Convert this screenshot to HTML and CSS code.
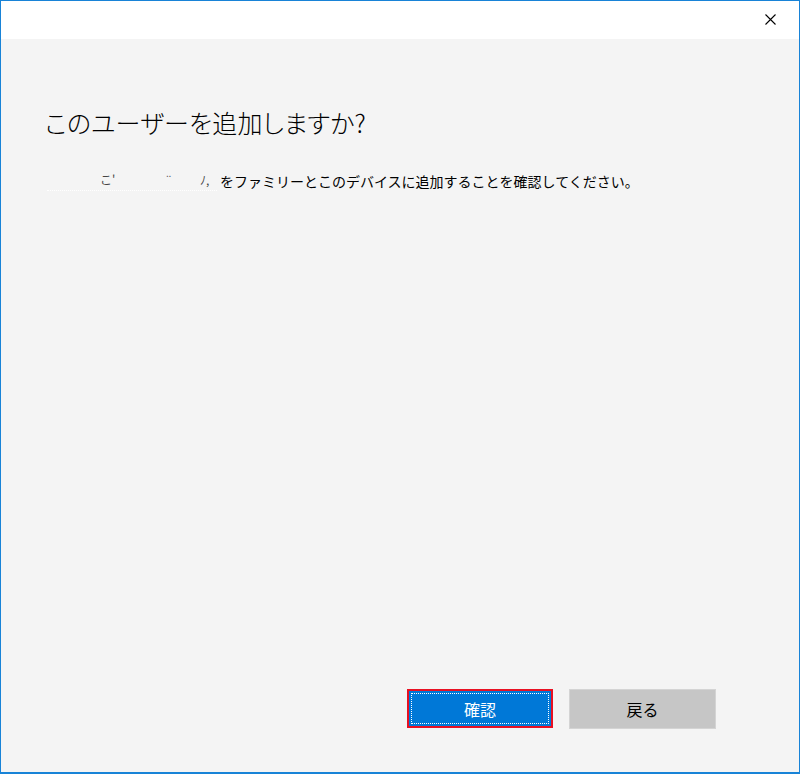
FILE: index.html
```html
<!DOCTYPE html>
<html lang="ja">
<head>
<meta charset="utf-8">
<link rel="stylesheet" href="styles.css">
</head>
<body>
<div class="window">
  <div class="titlebar">
    <svg class="close" width="11" height="11" viewBox="0 0 11 11"><path d="M0.5 0.5 L10.5 10.5 M10.5 0.5 L0.5 10.5" stroke="#000" stroke-width="1.1" fill="none"/></svg>
  </div>
  <div class="content">
    <h1 class="heading">このユーザーを追加しますか?</h1>
    <p class="message"><span class="redacted"><span class="r1">こ'</span><span class="r2">¨</span><span class="r3">ﾉ,</span></span>をファミリーとこのデバイスに追加することを確認してください。</p>
    <div class="spacer"></div>
    <div class="actions">
      <button class="btn btn-primary"><span class="focus">確認</span></button>
      <button class="btn btn-secondary">戻る</button>
    </div>
  </div>
</div>
</body>
</html>
```
FILE: styles.css
```css
html, body {
  margin: 0;
  padding: 0;
}
body {
  font-family: "Noto Sans CJK JP", "Noto Sans", sans-serif;
  background: #f4f4f4;
}
.window {
  width: 800px;
  height: 774px;
  box-sizing: border-box;
  border: 1px solid #1883d7;
  border-bottom-width: 2px;
  display: flex;
  flex-direction: column;
}
.titlebar {
  height: 38px;
  background: #ffffff;
  display: flex;
  justify-content: flex-end;
  align-items: flex-start;
  padding-right: 23px;
  box-sizing: border-box;
}
.close {
  margin-top: 13px;
  display: block;
}
.content {
  flex: 1;
  background: #f4f4f4;
  display: flex;
  flex-direction: column;
  padding-left: 44px;
}
.heading {
  margin: 66px 0 0 0;
  font-size: 25px;
  line-height: 34px;
  font-weight: 300;
  color: #000;
  font-feature-settings: "palt";
  letter-spacing: 0.2px;
}
.message {
  margin: 32px 0 0 2px;
  font-size: 14px;
  line-height: 20px;
  color: #000;
  display: flex;
  align-items: center;
}
.redacted {
  display: inline-block;
  width: 170px;
  height: 18px;
  margin-right: 3px;
  position: relative;
  border-bottom: 1px dotted #ffffff;
}
.redacted span {
  position: absolute;
  top: -2px;
  font-size: 12px;
  color: #444;
}
.r1 { left: 53px; }
.r2 { left: 118px; }
.r3 { left: 153px; top: 2px; }
.spacer {
  flex: 1;
}
.actions {
  display: flex;
  justify-content: flex-end;
  align-items: flex-start;
  gap: 16px;
  padding-right: 83px;
  padding-bottom: 43px;
}
.btn {
  font-family: "Noto Sans CJK JP", "Noto Sans", sans-serif;
  font-size: 16px;
  height: 40px;
  box-sizing: border-box;
  margin: 0;
  padding: 0;
  cursor: default;
}
.btn-primary {
  width: 146px;
  height: 39px;
  background: #0078d7;
  border: 2px solid #e81123;
  color: #fff;
  padding: 2px;
}
.btn-primary .focus {
  display: flex;
  align-items: center;
  justify-content: center;
  height: 100%;
  box-sizing: border-box;
  border: 1px dotted #ffffff;
}
.btn-secondary {
  width: 147px;
  background: #c6c6c6;
  border: 1px solid #d4d4d4;
  color: #000;
}
```
